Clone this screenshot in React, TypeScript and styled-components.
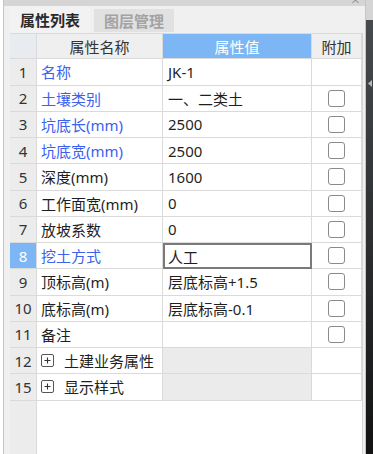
import styled, { createGlobalStyle } from "styled-components";

const GlobalStyle = createGlobalStyle`
  html, body {
    margin: 0;
    padding: 0;
    background: #ffffff;
  }
  body {
    font-family: "Noto Sans", "Noto Sans CJK SC", sans-serif;
    font-size: 15px;
    color: #1f1f1f;
  }
`;

const Window = styled.div`
  width: 373px;
  height: 454px;
  display: flex;
  overflow: hidden;
`;

const Panel = styled.div`
  margin-left: 3px;
  flex: 1;
  display: flex;
  flex-direction: column;
  border-left: 1px solid #c6c6c6;
  background: #f0f0f0;
`;

const TitleStrip = styled.div`
  height: 6px;
  background: #d5d5d5;
  display: flex;
  justify-content: flex-end;
  padding-right: 6px;
  overflow: hidden;
  svg {
    display: block;
  }
`;

const TabBar = styled.div`
  height: 27px;
  display: flex;
  align-items: flex-end;
  gap: 4px;
  padding-left: 6px;
  background: #f0f0f0;
`;

const Tab = styled.div<{ $active?: boolean }>`
  height: ${(p) => (p.$active ? "27px" : "23px")};
  width: 80px;
  box-sizing: border-box;
  display: flex;
  align-items: center;
  justify-content: center;
  font-family: "Noto Sans CJK SC", sans-serif;
  font-weight: 700;
  font-size: 15px;
  color: ${(p) => (p.$active ? "#2a2a2a" : "#a3a3a3")};
  background: ${(p) => (p.$active ? "#f2f2f2" : "#e1e1e1")};
  margin-bottom: ${(p) => (p.$active ? "0" : "1px")};
`;

const Body = styled.div`
  flex: 1;
  display: flex;
  flex-direction: column;
  margin-left: 6px;
  margin-right: 2px;
  background: #ffffff;
  border-right: 1px solid #d6d6d6;
`;

const Grid = styled.div`
  display: grid;
  grid-template-columns: 27px 126px 149px 50px;
  grid-auto-rows: 26.25px;
`;

const Cell = styled.div`
  box-sizing: border-box;
  border-right: 1px solid #dadada;
  border-bottom: 1px solid #dadada;
  display: flex;
  align-items: center;
  white-space: nowrap;
  overflow: hidden;
`;

const HeadCell = styled(Cell)<{ $tone?: "corner" | "plain" | "blue" }>`
  justify-content: center;
  font-family: "Noto Sans CJK SC", sans-serif;
  color: ${(p) => (p.$tone === "blue" ? "#ffffff" : "#333333")};
  background: ${(p) =>
    p.$tone === "blue" ? "#7db6f4" : p.$tone === "corner" ? "#e8ecf1" : "#efefef"};
  border-top: 1px solid #dadada;
`;

const NumCell = styled(Cell)<{ $selected?: boolean }>`
  justify-content: center;
  background: ${(p) => (p.$selected ? "#7db6f4" : "#ececec")};
  color: ${(p) => (p.$selected ? "#ffffff" : "#333333")};
`;

const NameCell = styled(Cell)<{ $blue?: boolean }>`
  padding-left: 4px;
  gap: 10px;
  color: ${(p) => (p.$blue ? "#3a62ee" : "#1f1f1f")};
`;

const ValueCell = styled(Cell)<{ $muted?: boolean; $editing?: boolean }>`
  padding-left: 5px;
  background: ${(p) => (p.$muted ? "#ebebeb" : "#ffffff")};
  ${(p) =>
    p.$editing &&
    `
    border: 2px solid #7a7a7a;
    padding-left: 3px;
  `}
`;

const ExtraCell = styled(Cell)`
  justify-content: center;
`;

const CheckBox = styled.span`
  width: 17px;
  height: 17px;
  box-sizing: border-box;
  border: 1.5px solid #8a8a8a;
  border-radius: 3px;
  background: #ffffff;
`;

const Expander = styled.span`
  width: 13px;
  height: 13px;
  box-sizing: border-box;
  border: 1px solid #555555;
  border-radius: 2px;
  display: flex;
  align-items: center;
  justify-content: center;
  svg {
    display: block;
  }
`;

const Filler = styled.div`
  flex: 1;
  display: flex;
`;

const FillerHead = styled.div`
  width: 27px;
  background: #ececec;
  border-right: 1px solid #dadada;
  box-sizing: border-box;
`;

const Splitter = styled.div`
  width: 7px;
  display: flex;
  flex-direction: column;
  border-left: 1px solid #c4c4c4;
`;

const SplitterTop = styled.div`
  height: 20px;
  background: #d5d5d5;
`;

const SplitterBar = styled.div`
  flex: 1;
  background: linear-gradient(#474b4e, #121212);
  padding-top: 60px;
  display: flex;
  justify-content: center;
  svg {
    display: block;
  }
`;

interface IRow {
  n: string;
  name: string;
  value?: string;
  blue?: boolean;
  check?: boolean;
  selected?: boolean;
  group?: boolean;
}

const rows: IRow[] = [
  { n: "1", name: "名称", value: "JK-1", blue: true },
  { n: "2", name: "土壤类别", value: "一、二类土", blue: true, check: true },
  { n: "3", name: "坑底长(mm)", value: "2500", blue: true, check: true },
  { n: "4", name: "坑底宽(mm)", value: "2500", blue: true, check: true },
  { n: "5", name: "深度(mm)", value: "1600", check: true },
  { n: "6", name: "工作面宽(mm)", value: "0", check: true },
  { n: "7", name: "放坡系数", value: "0", check: true },
  { n: "8", name: "挖土方式", value: "人工", blue: true, check: true, selected: true },
  { n: "9", name: "顶标高(m)", value: "层底标高+1.5", check: true },
  { n: "10", name: "底标高(m)", value: "层底标高-0.1", check: true },
  { n: "11", name: "备注", value: "", check: true },
  { n: "12", name: "土建业务属性", group: true },
  { n: "15", name: "显示样式", group: true },
];

function PlusIcon() {
  return (
    <svg width="7" height="7" viewBox="0 0 7 7">
      <path d="M3.5 0.5v6M0.5 3.5h6" stroke="#333" strokeWidth="1.1" />
    </svg>
  );
}

export default function App() {
  return (
    <Window>
      <GlobalStyle />
      <Panel>
        <TitleStrip>
          <svg width="7" height="6" viewBox="0 0 7 6">
            <path d="M0.5 -3L6.5 3M6.5 -3L0.5 3" stroke="#7a7a7a" strokeWidth="1" />
          </svg>
        </TitleStrip>
        <TabBar>
          <Tab $active>属性列表</Tab>
          <Tab>图层管理</Tab>
        </TabBar>
        <Body>
          <Grid>
            <HeadCell $tone="corner" />
            <HeadCell>属性名称</HeadCell>
            <HeadCell $tone="blue">属性值</HeadCell>
            <HeadCell>附加</HeadCell>
            {rows.map((r) => (
              <Row key={r.n} row={r} />
            ))}
          </Grid>
          <Filler>
            <FillerHead />
          </Filler>
        </Body>
      </Panel>
      <Splitter>
        <SplitterTop />
        <SplitterBar>
          <svg width="4" height="7" viewBox="0 0 4 7">
            <path d="M4 0L0 3.5L4 7Z" fill="#b8b8b8" />
          </svg>
        </SplitterBar>
      </Splitter>
    </Window>
  );
}

function Row({ row }: { row: IRow }) {
  return (
    <>
      <NumCell $selected={row.selected}>{row.n}</NumCell>
      <NameCell $blue={row.blue}>
        {row.group && (
          <Expander>
            <PlusIcon />
          </Expander>
        )}
        {row.name}
      </NameCell>
      <ValueCell $muted={row.group} $editing={row.selected}>
        {row.value}
      </ValueCell>
      <ExtraCell>{row.check && <CheckBox />}</ExtraCell>
    </>
  );
}
